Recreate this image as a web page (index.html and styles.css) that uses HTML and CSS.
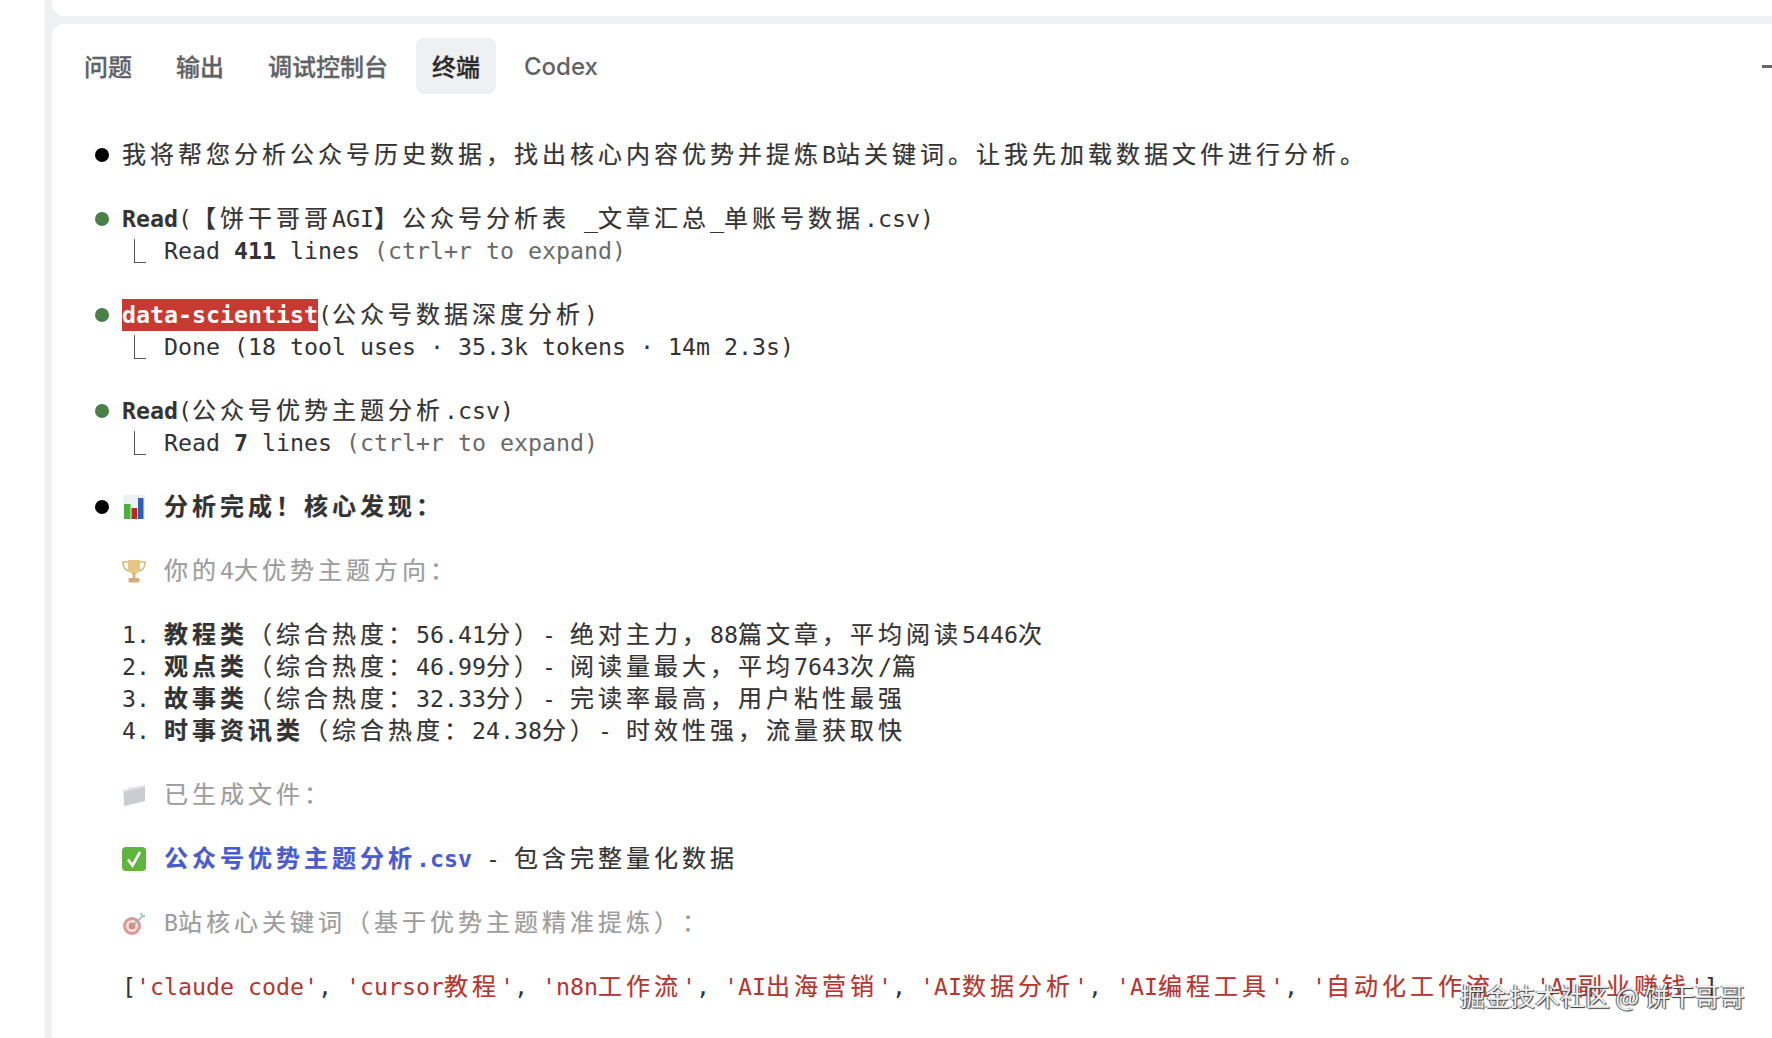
FILE: index.html
```html
<!DOCTYPE html>
<html lang="zh-CN">
<head>
<meta charset="utf-8">
<title>终端</title>
<link rel="stylesheet" href="styles.css">
</head>
<body>
<div class="sidebar"></div>
<main class="main">
  <div class="card-top"></div>
  <section class="panel">
    <nav class="tabs">
      <span class="tab">问题</span>
      <span class="tab">输出</span>
      <span class="tab">调试控制台</span>
      <span class="tab active">终端</span>
      <span class="tab latin">Codex</span>
      <span class="minus"></span>
    </nav>
    <div class="term">
      <div class="group">
        <div class="line"><i class="dot"></i><span class="c">我将帮您分析公众号历史数据，找出核心内容优势并提炼</span>B<span class="c">站关键词。让我先加载数据文件进行分析。</span></div>
      </div>
      <div class="group">
        <div class="line"><i class="dot green"></i><b>Read</b>(<span class="c">【饼干哥哥</span>AGI<span class="c">】公众号分析表</span> _<span class="c">文章汇总</span>_<span class="c">单账号数据</span>.csv)</div>
        <div class="line sub"><i class="tree"></i>Read <b>411</b> lines <span class="dim">(ctrl+r to expand)</span></div>
      </div>
      <div class="group">
        <div class="line"><i class="dot green"></i><b class="hl">data-scientist</b>(<span class="c">公众号数据深度分析</span>)</div>
        <div class="line sub"><i class="tree"></i>Done (18 tool uses · 35.3k tokens · 14m 2.3s)</div>
      </div>
      <div class="group">
        <div class="line"><i class="dot green"></i><b>Read</b>(<span class="c">公众号优势主题分析</span>.csv)</div>
        <div class="line sub"><i class="tree"></i>Read <b>7</b> lines <span class="dim">(ctrl+r to expand)</span></div>
      </div>
      <div class="group">
        <div class="line"><i class="dot"></i><svg class="emo" viewBox="0 0 24 24"><rect x="1" y="0" width="22" height="24" fill="#eef1f4"/><rect x="2" y="9" width="6.5" height="15" fill="#4caf3f"/><rect x="9.5" y="13" width="5.5" height="11" fill="#c0281f"/><rect x="16" y="3" width="5.5" height="21" fill="#2d5fb8"/></svg><b class="c">分析完成！核心发现：</b></div>
      </div>
      <div class="group">
        <div class="line in muted"><svg class="emo" viewBox="0 0 24 24"><path d="M6 1h12v8c0 4-3 6-6 6s-6-2-6-6z" fill="#e6c684"/><path d="M6 3H1c0 6 2 8 6 9M18 3h5c0 6-2 8-6 9" fill="none" stroke="#dcb978" stroke-width="1.7"/><rect x="10.5" y="14" width="3" height="5" fill="#d9b676"/><rect x="6.5" y="19" width="11" height="4.5" rx="1" fill="#d3ae78"/></svg><span class="c">你的</span>4<span class="c">大优势主题方向：</span></div>
      </div>
      <div class="group">
        <div class="line in">1. <b class="c">教程类</b><span class="c">（综合热度：</span>56.41<span class="c">分）</span>- <span class="c">绝对主力，</span>88<span class="c">篇文章，平均阅读</span>5446<span class="c">次</span></div>
        <div class="line in">2. <b class="c">观点类</b><span class="c">（综合热度：</span>46.99<span class="c">分）</span>- <span class="c">阅读量最大，平均</span>7643<span class="c">次</span>/<span class="c">篇</span></div>
        <div class="line in">3. <b class="c">故事类</b><span class="c">（综合热度：</span>32.33<span class="c">分）</span>- <span class="c">完读率最高，用户粘性最强</span></div>
        <div class="line in">4. <b class="c">时事资讯类</b><span class="c">（综合热度：</span>24.38<span class="c">分）</span>- <span class="c">时效性强，流量获取快</span></div>
      </div>
      <div class="group">
        <div class="line in muted"><svg class="emo" viewBox="0 0 24 24"><path d="M1 7l5-1 1-2 4 .5L23 2v16L2 23z" fill="#dfe1e3"/><path d="M2 9l21-5v14L2 23z" fill="#c9ccd0"/></svg><span class="c">已生成文件：</span></div>
      </div>
      <div class="group">
        <div class="line in"><svg class="emo" viewBox="0 0 24 24"><rect width="24" height="24" rx="4" fill="#5fb53e"/><path d="M6 12.5l4.5 6L18 5" fill="none" stroke="#fff" stroke-width="2.6"/></svg><b class="link"><span class="c">公众号优势主题分析</span>.csv</b> - <span class="c">包含完整量化数据</span></div>
      </div>
      <div class="group">
        <div class="line in muted"><svg class="emo" viewBox="0 0 24 24"><circle cx="10" cy="15" r="9" fill="#dc9a96"/><circle cx="10" cy="15" r="6" fill="#f3e3df"/><circle cx="10" cy="15" r="3.4" fill="#d98a85"/><path d="M10 15L21 5" stroke="#8fb5b1" stroke-width="1.6"/><path d="M19 2l1 3 3 0" fill="none" stroke="#a3c9c4" stroke-width="2"/></svg>B<span class="c">站核心关键词（基于优势主题精准提炼）：</span></div>
      </div>
      <div class="group">
        <div class="line in">[<span class="str">'claude code'</span>, <span class="str">'cursor<span class="c">教程</span>'</span>, <span class="str">'n8n<span class="c">工作流</span>'</span>, <span class="str">'AI<span class="c">出海营销</span>'</span>, <span class="str">'AI<span class="c">数据分析</span>'</span>, <span class="str">'AI<span class="c">编程工具</span>'</span>, <span class="str">'<span class="c">自动化工作流</span>'</span>, <span class="str">'AI<span class="c">副业赚钱</span>'</span>]</div>
      </div>
    </div>
  </section>
</main>
<div class="watermark">掘金技术社区 @ 饼干哥哥</div>
</body>
</html>
```

FILE: styles.css
```css
* { box-sizing: border-box; }
html, body { margin: 0; height: 100%; }
body {
  display: flex;
  height: 1038px;
  overflow: hidden;
  background: #fff;
  position: relative;
}
.sidebar { width: 45px; flex: none; background: #fff; }
.main {
  flex: 1;
  min-width: 0;
  display: flex;
  flex-direction: column;
  gap: 8px;
  padding-left: 7px;
  background: #eff0f2;
}
.card-top {
  height: 16px;
  flex: none;
  background: #fff;
  border-radius: 0 0 0 12px;
}
.panel {
  flex: 1;
  background: #fff;
  border-radius: 12px 0 0 0;
  padding: 14px 0 0 16px;
}
.tabs {
  display: flex;
  gap: 12px;
  align-items: center;
  height: 56px;
  font-family: Inter, "Noto Sans CJK SC", sans-serif;
  font-size: 24px;
  font-weight: 500;
  color: #606266;
  -webkit-text-stroke: 0.3px;
}
.tab {
  height: 56px;
  padding: 0 16px 2px;
  display: flex;
  align-items: center;
  border-radius: 8px;
}
.tab.active { background: #eef0f1; color: #2b2b2b; }
.tab.latin { padding-bottom: 0; -webkit-text-stroke: 0; }
.minus {
  margin-left: auto;
  width: 10px;
  height: 3px;
  background: #666;
}
.term {
  margin: 43px 0 0 26px;
  display: flex;
  flex-direction: column;
  gap: 32px;
  font-family: "DejaVu Sans Mono", "Noto Sans CJK SC", monospace;
  font-size: 23.25px;
  color: #333;
  text-spacing-trim: space-all;
  font-kerning: none;
}
.line {
  height: 32px;
  line-height: 32px;
  white-space: pre;
}
.line.in { padding-left: 28px; }
.line.sub { line-height: 36px; }
.muted { color: #9c9c9c; }
.c {
  font-family: "Noto Sans CJK SC", sans-serif;
  font-size: 24px;
  letter-spacing: 4px;
  -webkit-text-stroke: 0.2px;
}
.dot {
  display: inline-block;
  width: 28px;
  vertical-align: middle;
  height: 14px;
  position: relative;
  top: -2px;
}
.dot::before {
  content: "";
  display: block;
  width: 14px;
  height: 14px;
  margin-left: 1px;
  border-radius: 50%;
  background: #000;
}
.dot.green::before { background: #4a7f45; }
.tree {
  display: inline-block;
  width: 12px;
  height: 24px;
  margin: 0 18px 0 40px;
  border-left: 1.5px solid #555;
  border-bottom: 1.5px solid #555;
  vertical-align: -4px;
}
.dim { color: #6a6a6a; }
.hl { background: #c63a32; color: #fff; display: inline-block; height: 32px; }
.emo {
  width: 24px;
  height: 24px;
  margin-right: 18px;
  vertical-align: -4px;
}
.link { color: #4a5bd0; }
.str { color: #b5352f; }
.watermark {
  position: absolute;
  left: 1460px;
  top: 979px;
  font-family: "Noto Sans CJK SC", sans-serif;
  font-size: 25px;
  line-height: 32px;
  white-space: nowrap;
  color: #f2f2f2;
  text-shadow: 1px 1px 1px #333, -1px 0 1px #555;
}
```
